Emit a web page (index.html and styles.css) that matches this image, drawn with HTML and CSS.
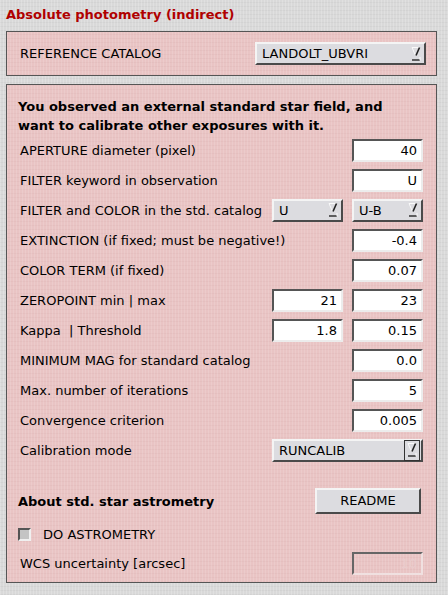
FILE: index.html
```html
<!DOCTYPE html>
<html>
<head>
<meta charset="utf-8">
<link rel="stylesheet" href="styles.css">
</head>
<body>
<div class="page">
  <div class="title">Absolute photometry (indirect)</div>

  <div class="panel panel-top">
    <span class="label">REFERENCE CATALOG</span>
    <div class="combo combo-wide">
      <span>LANDOLT_UBVRI</span>
      <svg class="arrow" width="10" height="16" viewBox="0 0 10 16"><path d="M1 1.5 H8.5" stroke="#fafafa" stroke-width="1"/><path d="M1 1.5 L4.5 9.5" stroke="#fafafa" stroke-width="1"/><path d="M8.5 1.5 L5 9.5" stroke="#222" stroke-width="1.6"/><path d="M1 14 H9" stroke="#333" stroke-width="1.5"/><path d="M9 11 V14.5" stroke="#fafafa" stroke-width="1"/></svg>
    </div>
  </div>

  <div class="panel panel-main">
    <div class="intro">You observed an external standard star field, and want to calibrate other exposures with it.</div>

    <div class="row"><span class="label">APERTURE diameter (pixel)</span><div class="field">40</div></div>
    <div class="row"><span class="label">FILTER keyword in observation</span><div class="field">U</div></div>
    <div class="row"><span class="label">FILTER and COLOR in the std. catalog</span>
      <div class="combo combo-small"><span>U</span>
        <svg class="arrow" width="10" height="16" viewBox="0 0 10 16"><path d="M1 1.5 H8.5" stroke="#fafafa" stroke-width="1"/><path d="M1 1.5 L4.5 9.5" stroke="#fafafa" stroke-width="1"/><path d="M8.5 1.5 L5 9.5" stroke="#222" stroke-width="1.6"/><path d="M1 14 H9" stroke="#333" stroke-width="1.5"/><path d="M9 11 V14.5" stroke="#fafafa" stroke-width="1"/></svg>
      </div>
      <div class="combo combo-small"><span>U-B</span>
        <svg class="arrow" width="10" height="16" viewBox="0 0 10 16"><path d="M1 1.5 H8.5" stroke="#fafafa" stroke-width="1"/><path d="M1 1.5 L4.5 9.5" stroke="#fafafa" stroke-width="1"/><path d="M8.5 1.5 L5 9.5" stroke="#222" stroke-width="1.6"/><path d="M1 14 H9" stroke="#333" stroke-width="1.5"/><path d="M9 11 V14.5" stroke="#fafafa" stroke-width="1"/></svg>
      </div>
    </div>
    <div class="row"><span class="label">EXTINCTION (if fixed; must be negative!)</span><div class="field">-0.4</div></div>
    <div class="row"><span class="label">COLOR TERM (if fixed)</span><div class="field">0.07</div></div>
    <div class="row"><span class="label">ZEROPOINT min | max</span><div class="field">21</div><div class="field">23</div></div>
    <div class="row"><span class="label">Kappa &nbsp;| Threshold</span><div class="field">1.8</div><div class="field">0.15</div></div>
    <div class="row"><span class="label">MINIMUM MAG for standard catalog</span><div class="field">0.0</div></div>
    <div class="row"><span class="label">Max. number of iterations</span><div class="field">5</div></div>
    <div class="row"><span class="label">Convergence criterion</span><div class="field">0.005</div></div>
    <div class="row"><span class="label">Calibration mode</span>
      <div class="combo combo-mode"><span>RUNCALIB</span>
        <div class="arrow-box">
          <svg class="arrow" width="10" height="16" viewBox="0 0 10 16"><path d="M1 1.5 H8.5" stroke="#fafafa" stroke-width="1"/><path d="M1 1.5 L4.5 9.5" stroke="#fafafa" stroke-width="1"/><path d="M8.5 1.5 L5 9.5" stroke="#222" stroke-width="1.6"/><path d="M1 14 H9" stroke="#333" stroke-width="1.5"/><path d="M9 11 V14.5" stroke="#fafafa" stroke-width="1"/></svg>
        </div>
      </div>
    </div>

    <div class="about">
      <span class="about-label">About std. star astrometry</span>
      <div class="button">README</div>
    </div>

    <div class="check-row">
      <span class="checkbox"></span>
      <span class="label">DO ASTROMETRY</span>
    </div>

    <div class="row wcs-row"><span class="label">WCS uncertainty [arcsec]</span><div class="field disabled">10</div></div>
  </div>
</div>
</body>
</html>
```
FILE: styles.css
```css
html, body {
  margin: 0;
  padding: 0;
}
body {
  width: 448px;
  height: 595px;
  overflow: hidden;
  background-color: #d9d9d9;
  background-image:
    repeating-linear-gradient(90deg, rgba(255,255,255,0.18) 0 1px, transparent 1px 3px),
    repeating-linear-gradient(0deg, rgba(0,0,0,0.03) 0 1px, transparent 1px 4px);
  font-family: "DejaVu Sans", "Liberation Sans", sans-serif;
  font-size: 13px;
  color: #000;
}
.page {
  padding: 6px 11px 0 6px;
}
.title {
  color: #b00000;
  font-weight: bold;
  font-size: 13px;
  line-height: 18px;
  height: 18px;
  margin-bottom: 7px;
}
.panel {
  border: 1px solid #555;
  background-color: #e9c4c4;
  background-image:
    repeating-linear-gradient(90deg, rgba(255,255,255,0.12) 0 1px, transparent 1px 3px),
    repeating-linear-gradient(0deg, rgba(150,90,90,0.05) 0 1px, transparent 1px 4px);
}
.panel-top {
  display: flex;
  align-items: center;
  justify-content: space-between;
  height: 23px;
  padding: 10px 10px 10px 13px;
}
.panel-main {
  margin-top: 8px;
  padding: 12px 13px 7px 11px;
}
.intro {
  font-weight: bold;
  line-height: 19px;
  padding-right: 30px;
}
.row {
  display: flex;
  align-items: center;
  height: 30px;
  gap: 9px;
  padding-left: 2px;
}
.row .label {
  flex: 1;
  white-space: nowrap;
}
.field {
  width: 63px;
  height: 19px;
  line-height: 19px;
  background: #fff;
  border-style: solid;
  border-width: 2px;
  border-color: #555 #ececec #ececec #555;
  text-align: right;
  padding-right: 4px;
  box-sizing: content-box;
}
.field.disabled {
  background: transparent;
  color: #e9cccc;
  border-color: #666 #f0e0e0 #f0e0e0 #666;
}
.combo {
  display: flex;
  align-items: center;
  justify-content: space-between;
  height: 19px;
  background: #dcdce0;
  border-style: solid;
  border-width: 2px;
  border-color: #f4f4f4 #4a4a4a #4a4a4a #f4f4f4;
  padding: 0 3px 0 5px;
}
.combo-wide {
  width: 159px;
}
.combo-small {
  width: 59px;
}
.combo-mode {
  width: 141px;
  padding-right: 1px;
}
.arrow {
  display: block;
}
.arrow-box {
  border: 1px solid #333;
  padding: 1px 2px;
  height: 17px;
  display: flex;
  align-items: center;
}
.about {
  display: flex;
  align-items: center;
  justify-content: space-between;
  margin-top: 23px;
  height: 26px;
  padding-right: 2px;
}
.about-label {
  font-weight: bold;
}
.button {
  width: 102px;
  height: 22px;
  line-height: 22px;
  text-align: center;
  background: #dcdce0;
  border-style: solid;
  border-width: 2px;
  border-color: #f4f4f4 #4a4a4a #4a4a4a #f4f4f4;
}
.check-row {
  display: flex;
  align-items: center;
  height: 20px;
  margin-top: 10px;
}
.checkbox {
  width: 9px;
  height: 9px;
  background: #c4c4c4;
  border-style: solid;
  border-width: 2px;
  border-color: #555 #f0f0f0 #f0f0f0 #555;
  margin-right: 12px;
}
.wcs-row {
  margin-top: 7px;
  height: 24px;
}
```
